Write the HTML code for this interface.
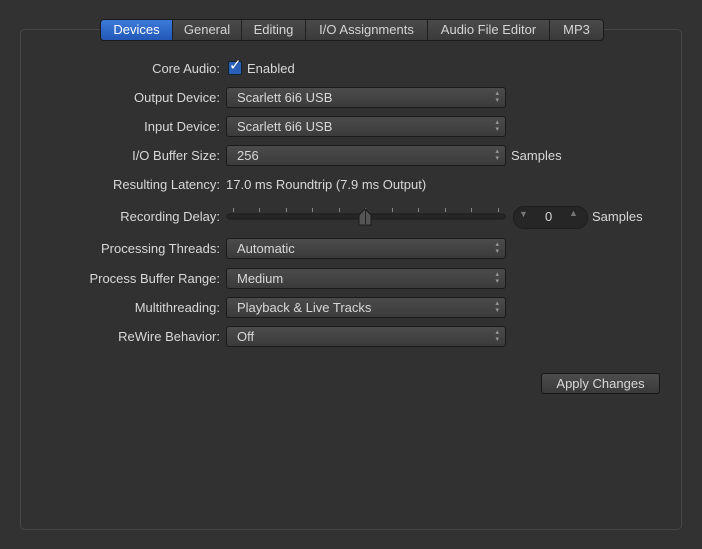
<!DOCTYPE html><html><head><style>
body{margin:0;width:702px;height:549px;background:#323232;font-family:"Liberation Sans",sans-serif;font-size:13px;color:#d8d8d8;position:relative;overflow:hidden}
.panel{position:absolute;left:20px;top:29px;width:660px;height:499px;border:1px solid #474747;border-radius:5px;background:#313131}
.tabs{position:absolute;left:100px;top:19px;height:20px;display:flex;border:1px solid #1a1a1a;border-radius:4px;overflow:hidden;background:linear-gradient(#4a4a4a,#3a3a3a)}
.tabs div{padding:0;text-align:center;line-height:20px;border-right:1px solid #1e1e1e;color:#d4d4d4}
.tabs div:last-child{border-right:none}
.tabs .on{background:linear-gradient(#3d7ad8,#2258b8);color:#fff}
.l{position:absolute;right:482px;text-align:right;white-space:nowrap}
.p{position:absolute;left:226px;width:278px;height:19px;border:1px solid #1a1a1a;border-radius:3px;background:linear-gradient(#4b4b4b,#3b3b3b);line-height:19px;padding-left:10px;box-sizing:border-box;width:280px;height:21px}
.p:after{content:"▴\A▾";white-space:pre;position:absolute;right:6px;top:2px;font-size:7px;line-height:7px;color:#999}
.t{position:absolute;white-space:nowrap}
</style></head><body>
<div class="panel"></div>
<div class="tabs"><div class="on" style="width:71px">Devices</div><div style="width:68px">General</div><div style="width:63px">Editing</div><div style="width:121px">I/O Assignments</div><div style="width:121px">Audio File Editor</div><div style="width:53px">MP3</div></div>
<div class="l" style="top:61px">Core Audio:</div>
<div style="position:absolute;left:228px;top:61px;width:12px;height:12px;border-radius:2px;background:#2a5fb8;border:1px solid #123"></div>
<div class="t" style="left:229px;top:56px;color:#fff;font-size:15px">✓</div>
<div class="t" style="left:247px;top:61px">Enabled</div>
<div class="l" style="top:90px">Output Device:</div><div class="p" style="top:87px">Scarlett 6i6 USB</div>
<div class="l" style="top:119px">Input Device:</div><div class="p" style="top:116px">Scarlett 6i6 USB</div>
<div class="l" style="top:148px">I/O Buffer Size:</div><div class="p" style="top:145px">256</div>
<div class="t" style="left:511px;top:148px">Samples</div>
<div class="l" style="top:177px">Resulting Latency:</div><div class="t" style="left:226px;top:177px">17.0 ms Roundtrip (7.9 ms Output)</div>
<div class="l" style="top:209px">Recording Delay:</div>
<svg style="position:absolute;left:226px;top:205px" width="282" height="24"><g stroke="#888" stroke-width="1"><path d="M7.5 3v4M33.5 3v4M60.5 3v4M86.5 3v4M113.5 3v4M139.5 3v4M166.5 3v4M192.5 3v4M219.5 3v4M245.5 3v4M272.5 3v4"/></g><rect x="1" y="9" width="278" height="5" rx="2.5" fill="#262626" stroke="#1c1c1c"/><path d="M133 10l6-6 6 6v10h-12z" fill="#555" stroke="#1a1a1a"/><path d="M139.5 5v14" stroke="#222"/></svg>
<div style="position:absolute;left:513px;top:206px;width:73px;height:21px;border-radius:11px;background:#262626;border:1px solid #1e1e1e"></div>
<div class="t" style="left:519px;top:209px;font-size:9px;color:#777">▼</div><div class="t" style="left:545px;top:209px">0</div><div class="t" style="left:569px;top:208px;font-size:9px;color:#777">▲</div>
<div class="t" style="left:592px;top:209px">Samples</div>
<div class="l" style="top:241px">Processing Threads:</div><div class="p" style="top:238px">Automatic</div>
<div class="l" style="top:271px">Process Buffer Range:</div><div class="p" style="top:268px">Medium</div>
<div class="l" style="top:300px">Multithreading:</div><div class="p" style="top:297px">Playback &amp; Live Tracks</div>
<div class="l" style="top:329px">ReWire Behavior:</div><div class="p" style="top:326px">Off</div>
<div style="position:absolute;left:541px;top:373px;width:119px;height:20px;border:1px solid #161616;border-radius:3px;background:linear-gradient(#4c4c4c,#3a3a3a);text-align:center;line-height:20px;box-sizing:border-box;height:21px">Apply Changes</div>
</body></html>
